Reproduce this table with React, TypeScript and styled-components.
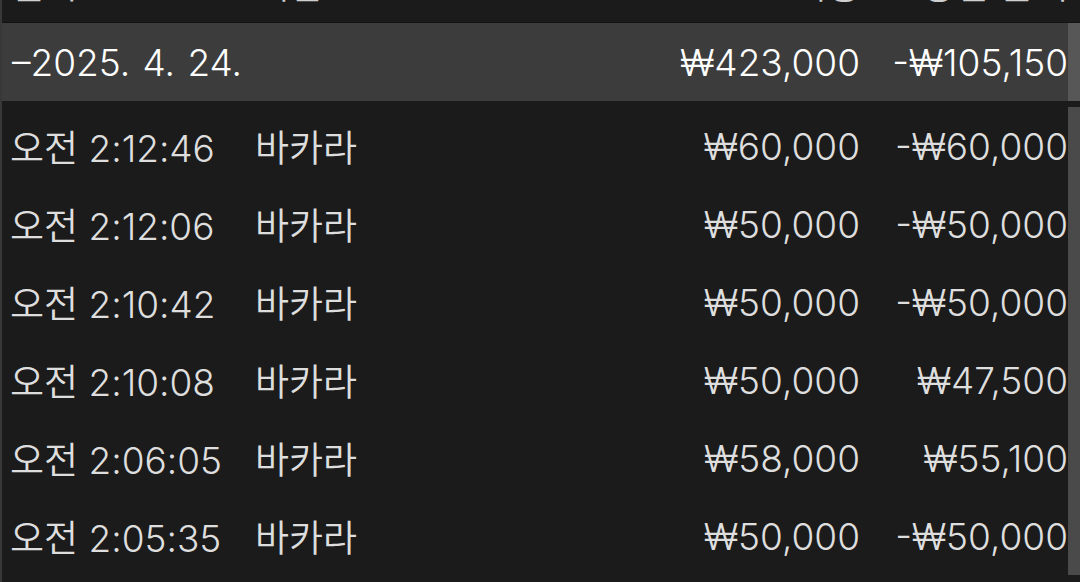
import React from 'react';
import styled, { createGlobalStyle } from 'styled-components';

const GlobalStyle = createGlobalStyle`
  html, body {
    margin: 0;
    padding: 0;
    background: #1b1b1b;
    overflow: hidden;
  }
  body {
    font-family: Inter, "Noto Sans CJK KR", sans-serif;
  }
`;

const Screen = styled.div`
  width: 1080px;
  height: 582px;
  overflow: hidden;
  background: #1b1b1b;
  border-left: 2px solid #383838;
  box-sizing: border-box;
`;

const Row = styled.div<{ $height: number; $bg: string }>`
  display: grid;
  grid-template-columns: 245px 1fr auto 208px 12px;
  align-items: center;
  height: ${(p) => p.$height}px;
  background: ${(p) => p.$bg};
  padding-left: 8px;
  font-size: 37px;
  font-weight: 350;
`;

const HeaderRow = styled(Row)`
  overflow: hidden;
  align-items: start;
  border-bottom: 1px solid #121212;
`;

const HeaderCell = styled.div<{ $right?: boolean }>`
  color: #cfcfcf;
  line-height: 44px;
  margin-top: -36px;
  text-align: ${(p) => (p.$right ? 'right' : 'left')};
`;

const Cell = styled.div<{ $right?: boolean; $strong?: boolean }>`
  color: ${(p) => (p.$strong ? '#ffffff' : '#dedede')};
  text-align: ${(p) => (p.$right ? 'right' : 'left')};
  white-space: nowrap;
`;

const DateCell = styled(Cell)`
  padding-left: 2px;
  word-spacing: 2px;
`;

const Track = styled.div<{ $tone: string }>`
  align-self: stretch;
  background: ${(p) => p.$tone};
`;

const Body = styled.div`
  padding-top: 6px;
`;

const entries = [
  { time: '오전 2:12:46', game: '바카라', bet: '₩60,000', result: '-₩60,000' },
  { time: '오전 2:12:06', game: '바카라', bet: '₩50,000', result: '-₩50,000' },
  { time: '오전 2:10:42', game: '바카라', bet: '₩50,000', result: '-₩50,000' },
  { time: '오전 2:10:08', game: '바카라', bet: '₩50,000', result: '₩47,500' },
  { time: '오전 2:06:05', game: '바카라', bet: '₩58,000', result: '₩55,100' },
  { time: '오전 2:05:35', game: '바카라', bet: '₩50,000', result: '-₩50,000' },
];

export default function App() {
  return (
    <>
      <GlobalStyle />
      <Screen>
        <HeaderRow $height={22} $bg="#1b1b1b">
          <HeaderCell>일시</HeaderCell>
          <HeaderCell>게임</HeaderCell>
          <HeaderCell $right>베팅</HeaderCell>
          <HeaderCell $right>당첨 금액</HeaderCell>
          <Track $tone="#1b1b1b" />
        </HeaderRow>
        <Row $height={78} $bg="#3c3c3c">
          <DateCell $strong>–2025. 4. 24.</DateCell>
          <Cell />
          <Cell $strong $right>₩423,000</Cell>
          <Cell $strong $right>-₩105,150</Cell>
          <Track $tone="#575757" />
        </Row>
        <Body>
          {entries.map((e) => (
            <Row key={e.time} $height={78} $bg="#1b1b1b">
              <Cell>{e.time}</Cell>
              <Cell>{e.game}</Cell>
              <Cell $right>{e.bet}</Cell>
              <Cell $right>{e.result}</Cell>
              <Track $tone="#4a4a4a" />
            </Row>
          ))}
        </Body>
      </Screen>
    </>
  );
}
